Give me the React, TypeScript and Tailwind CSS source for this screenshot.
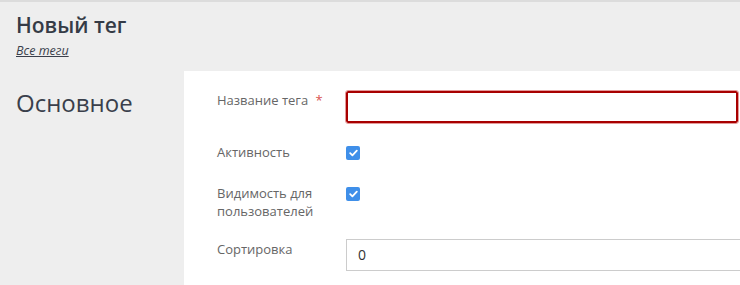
import React from "react";

function Check() {
  return (
    <div className="mt-[3px] flex h-[14px] w-[14px] items-center justify-center rounded-[2px] bg-[#3f8fe9]">
      <svg width="9" height="8" viewBox="0 0 9 8" fill="none">
        <path d="M1.2 4.2 L3.4 6.3 L7.8 1.6" stroke="white" strokeWidth="1.8" strokeLinecap="round" strokeLinejoin="round" />
      </svg>
    </div>
  );
}

export default function App() {
  return (
    <div
      className="h-[285px] w-[740px] overflow-hidden border-t-2 border-[#dcdcdc] bg-[#eeeeee] text-[#3a3f4b]"
      style={{ fontFamily: '"Open Sans", "Noto Sans", sans-serif' }}
    >
      <div className="px-4 pt-[8px]">
        <h1 className="text-[21px] font-semibold leading-[30px] text-[#353b46]">Новый тег</h1>
        <a className="mt-[3px] block text-[12.5px] italic leading-[16px] text-[#3a3f4b] underline">Все теги</a>
      </div>
      <div className="mt-[12px] flex h-[300px]">
        <div className="w-[184px] shrink-0 pl-4 pt-[16px]">
          <h2 className="text-[24px] font-normal leading-[32px] text-[#3a3f4b]">Основное</h2>
        </div>
        <div className="flex-1 overflow-hidden bg-white pl-[33px] pt-[20px] text-[13px] leading-[18px] text-[#666]">
          <div className="flex items-start">
            <div className="w-[129px] shrink-0">
              Название тега <span className="ml-[4px] text-[#d9534f]">*</span>
            </div>
            <div className="mr-[2px] h-[32px] flex-1 rounded-[2px] border-2 border-[#a80000] outline outline-1 outline-[#e49a9a]"></div>
          </div>
          <div className="mt-[20px] flex items-start">
            <div className="w-[129px] shrink-0">Активность</div>
            <Check />
          </div>
          <div className="mt-[23px] flex items-start">
            <div className="w-[129px] shrink-0">
              Видимость для
              <br />
              пользователей
            </div>
            <Check />
          </div>
          <div className="mt-[19px] flex items-start">
            <div className="w-[129px] shrink-0 pt-[1px]">Сортировка</div>
            <div className="flex h-[32px] w-[420px] shrink-0 items-center border border-[#cccccc] pl-[11px] text-[14px] text-[#333]">
              0
            </div>
          </div>
        </div>
      </div>
    </div>
  );
}
